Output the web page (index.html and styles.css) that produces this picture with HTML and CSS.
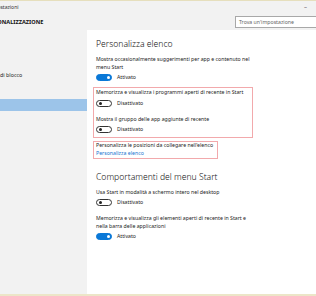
FILE: index.html
```html
<!DOCTYPE html>
<html lang="it">
<head>
<meta charset="utf-8">
<title>Impostazioni</title>
<link rel="stylesheet" href="styles.css">
</head>
<body>
<div class="window">
  <div class="topline"></div>
  <div class="titlebar">
    <span class="title">Impostazioni</span>
    <span class="min">–</span>
  </div>
  <div class="header">
    <span class="section">PERSONALIZZAZIONE</span>
    <div class="search">Trova un'impostazione</div>
  </div>
  <div class="main">
    <nav class="sidebar">
      <div class="nav-item">Schermata di blocco</div>
      <div class="nav-item">Temi</div>
      <div class="nav-item selected">Start</div>
    </nav>
    <section class="content">
      <h2 class="heading">Personalizza elenco</h2>
      <p class="text">Mostra occasionalmente suggerimenti per app e contenuto nel<br>menu Start</p>
      <div class="toggle-row"><span class="toggle on"></span><span class="label">Attivato</span></div>

      <div class="box">
        <p class="text">Memorizza e visualizza i programmi aperti di recente in Start</p>
        <div class="toggle-row t1"><span class="toggle"></span><span class="label">Disattivato</span></div>
        <p class="text gap">Mostra il gruppo delle app aggiunte di recente</p>
        <div class="toggle-row t2"><span class="toggle"></span><span class="label">Disattivato</span></div>
      </div>

      <div class="box box2">
        <p class="text">Personalizza le posizioni da collegare nell'elenco</p>
        <a class="link">Personalizza elenco</a>
      </div>

      <h2 class="heading h2b">Comportamenti del menu Start</h2>
      <p class="text">Usa Start in modalità a schermo intero nel desktop</p>
      <div class="toggle-row"><span class="toggle"></span><span class="label">Disattivato</span></div>
      <p class="text gap">Memorizza e visualizza gli elementi aperti di recente in Start e<br>nella barra delle applicazioni</p>
      <div class="toggle-row"><span class="toggle on"></span><span class="label">Attivato</span></div>
    </section>
  </div>
  <div class="bottomline"></div>
</div>
</body>
</html>
```
FILE: styles.css
```css
html, body {
  margin: 0;
  padding: 0;
}
body {
  width: 316px;
  height: 296px;
  overflow: hidden;
  font-family: "Noto Sans", "Open Sans", sans-serif;
  color: #1a1a1a;
  background: #f2f2f2;
}
.window {
  width: 316px;
  height: 296px;
  display: flex;
  flex-direction: column;
  overflow: hidden;
}
.topline {
  height: 1px;
  background: #e6dfbd;
  flex: none;
}
.titlebar {
  height: 12px;
  display: flex;
  align-items: center;
  justify-content: space-between;
  background: #f2f2f2;
  flex: none;
  overflow: hidden;
}
.title {
  font-size: 5px;
  margin-left: -12px;
  color: #333;
}
.min {
  font-size: 6px;
  margin-right: 9px;
  color: #444;
}
.header {
  height: 17px;
  display: flex;
  align-items: center;
  justify-content: space-between;
  background: #f2f2f2;
  flex: none;
  overflow: hidden;
}
.section {
  font-size: 5.6px;
  font-weight: 700;
  margin-left: -16px;
  color: #111;
}
.search {
  width: 84px;
  height: 12px;
  box-sizing: border-box;
  margin-right: -3px;
  margin-top: 1px;
  border: 1px solid #a8a8a8;
  background: #fff;
  font-size: 5.2px;
  line-height: 10px;
  padding-left: 3px;
  color: #666;
}
.main {
  flex: 1;
  display: flex;
  min-height: 0;
}
.sidebar {
  width: 87px;
  flex: none;
  background: #f2f2f2;
  padding-top: 39px;
  box-sizing: border-box;
  overflow: hidden;
}
.nav-item {
  font-size: 5.3px;
  height: 12px;
  line-height: 12px;
  margin-left: -28px;
  margin-bottom: 2px;
  white-space: nowrap;
}
.nav-item.selected {
  background: #9cc4e9;
  margin-left: 0;
  color: transparent;
  margin-top: 4px;
}
.content {
  flex: 1;
  background: #fff;
  padding: 8px 0 0 9px;
}
.heading {
  margin: 0 0 5px;
  font-size: 8.6px;
  line-height: 12px;
  font-weight: 300;
  color: #111;
  white-space: nowrap;
}
.h2b {
  margin-top: 12px;
}
.text {
  margin: 0;
  font-size: 5.2px;
  line-height: 8px;
  white-space: nowrap;
  color: #222;
}
.text.gap {
  margin-top: 8px;
}
.toggle-row {
  display: flex;
  align-items: center;
  gap: 5px;
  height: 8px;
  margin-top: 2px;
}
.box .toggle-row {
  margin-top: 3px;
}
.box .toggle-row.t2 {
  margin-top: 2px;
}
.toggle {
  width: 16px;
  height: 7px;
  box-sizing: border-box;
  border-radius: 4px;
  border: 1px solid #333;
  background: #fff;
  display: flex;
  align-items: center;
  padding: 0 1.5px;
  justify-content: flex-start;
}
.toggle::after {
  content: "";
  width: 3px;
  height: 3px;
  border-radius: 50%;
  background: #222;
}
.toggle.on {
  background: #0a78d7;
  border-color: #0a78d7;
  justify-content: flex-end;
}
.toggle.on::after {
  background: #fff;
}
.label {
  font-size: 5.2px;
  line-height: 8px;
  color: #222;
}
.box {
  margin-top: 6px;
  margin-left: -3px;
  width: 160px;
  box-sizing: border-box;
  border: 1px solid #f2a9ac;
  padding: 0 0 4px 2px;
}
.box2 {
  margin-top: 3px;
  width: 125px;
  padding-bottom: 0;
}
.box2 .text {
  line-height: 7px;
}
.link {
  display: block;
  font-size: 5.2px;
  line-height: 9px;
  color: #1673cf;
}
.bottomline {
  height: 2px;
  background: #ece6c8;
  flex: none;
}
```
